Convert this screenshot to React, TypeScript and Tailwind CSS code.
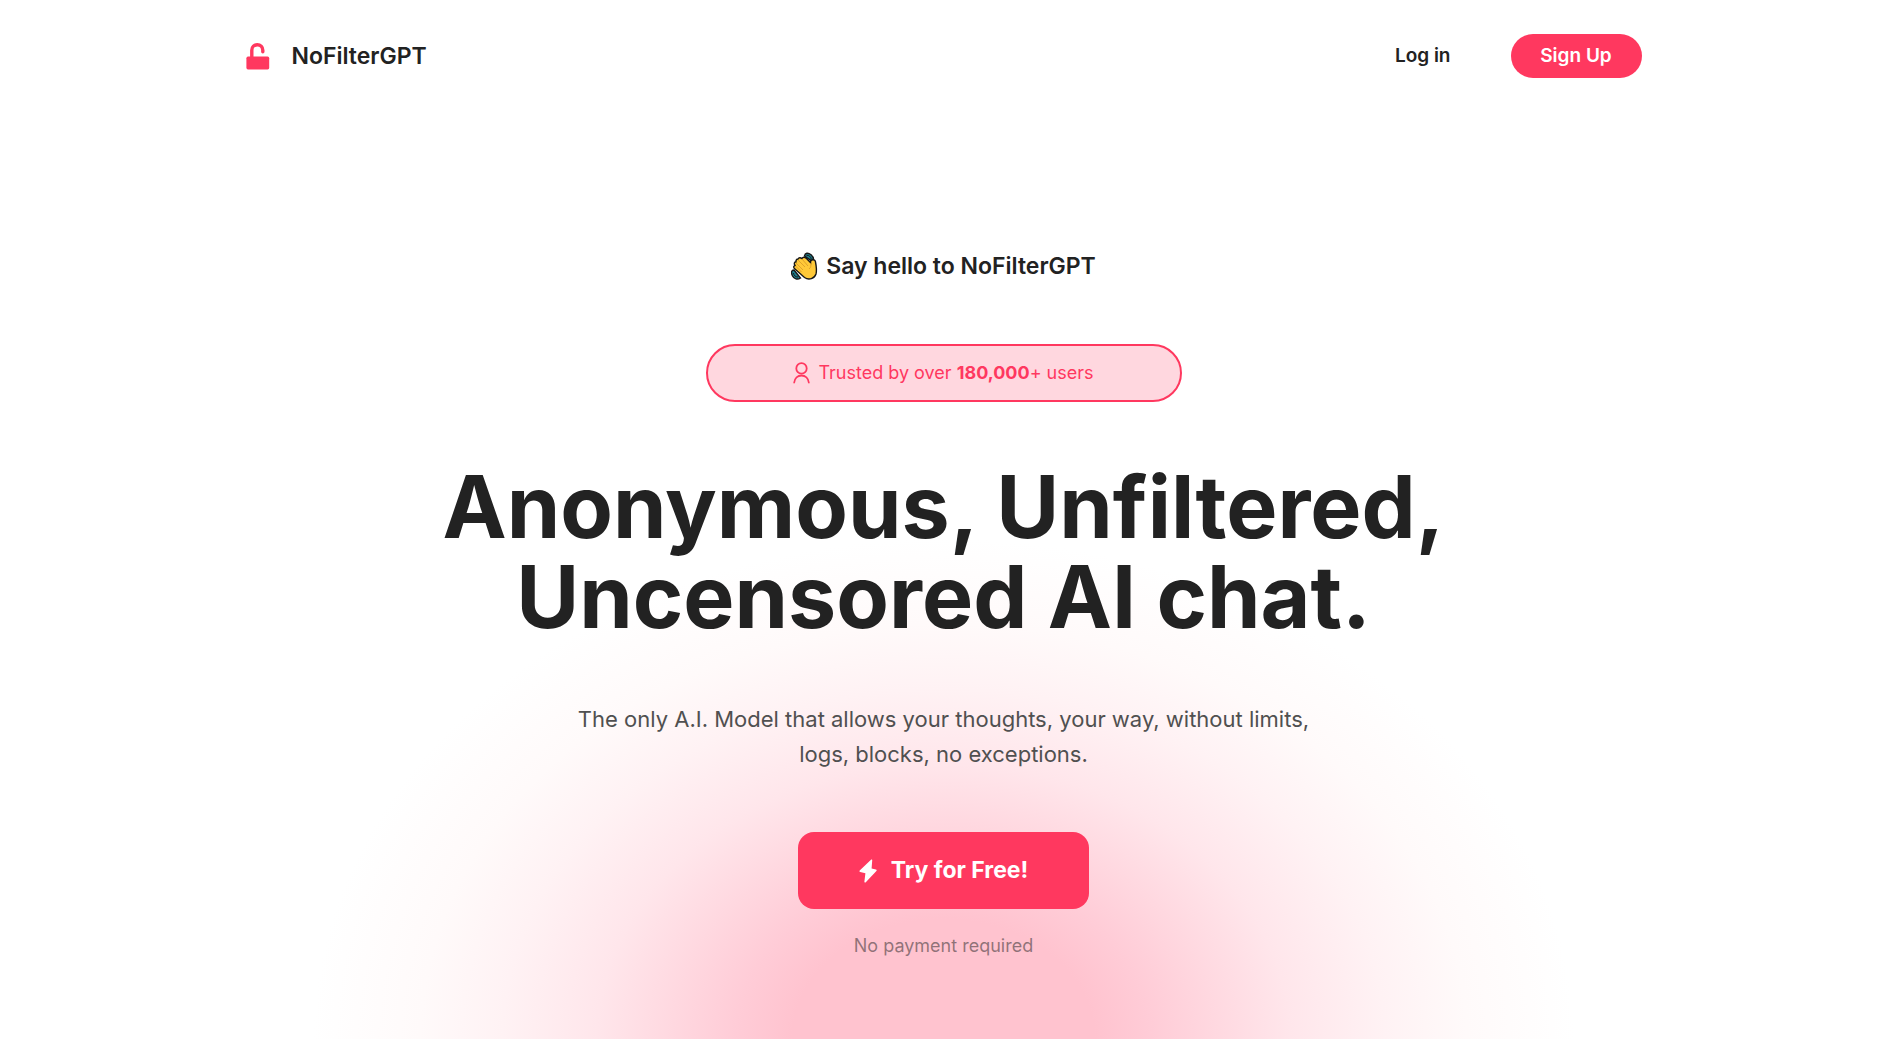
function UnlockIcon() {
  return (
    <svg viewBox="0 0 24 27" className="h-[27px] w-6 text-[#ff385f]" fill="currentColor" aria-hidden="true">
      <rect x="0.4" y="13.6" width="22.8" height="12.8" rx="1.6" />
      <path d="M5.8 14.5V7.2a5.500 5.500 0 0 1 11 0v1.600" fill="none" stroke="currentColor" strokeWidth="3.4" strokeLinecap="round" />
    </svg>
  );
}

function WaveIcon() {
  return (
    <svg viewBox="0 0 27 29" className="h-[29px] w-[27px]" aria-hidden="true">
      <path
        d="M13.5 4C14 .8 17 .3 20 2.8c2.500 2 3 4.400 2 7zM3 18c-3 0-3 3-1.500 6C3 27 6.500 28 9.500 26z"
        fill="#1b7f90"
        stroke="#161616"
        strokeWidth="1.4"
      />
      <path d="M15.5 3.300c2.500-.3 4.500 1.600 4.800 4M2.500 21c.3 2.500 2 4 4.500 4" fill="none" stroke="#161616" strokeWidth="1" />
      <path
        d="M7 7c1-2 3-1 4-.5 1-2 3-1.500 4.500 0l4 4c-.3-3 4.500-4 5-.5.8 4 1.500 8 .5 12-1.500 4.500-7 6.500-11.500 3.500L4 17c-2-1.500-1.500-3 0-3.700-1.500-1.800-.5-3.300 1-3.500-.2-1.300.5-2.800 2-2.800z"
        fill="#ffc938"
        stroke="#161616"
        strokeWidth="1.4"
      />
      <path
        d="m7 8 7 7M5 11l7 7M4.500 14l6 6M11 7l6 7M20 11c-.5 3 .5 4-2 6"
        fill="none"
        stroke="#e0a22a"
        strokeWidth="1"
      />
    </svg>
  );
}

function UserIcon() {
  return (
    <svg
      viewBox="0 0 17 22"
      className="h-[22px] w-[17px]"
      fill="none"
      stroke="currentColor"
      strokeWidth="1.8"
      strokeLinecap="round"
      aria-hidden="true"
    >
      <circle cx="8.5" cy="6.4" r="5.2" />
      <path d="M1.200 20.500c.5-4.300 3.500-7 7.300-7s6.800 2.700 7.300 7" />
    </svg>
  );
}

function BoltIcon() {
  return (
    <svg viewBox="0 0 18 24" className="h-6 w-[18px]" fill="currentColor" aria-hidden="true">
      <path d="M12 .7c.6-.6 1.400-.2 1.200.7l-.6 8.100 4.300 1c.8.2 1 .9.5 1.500L6.800 23.200c-.6.700-1.600.3-1.400-.7l1-8.200-5.200-1.400c-.8-.2-1-.9-.5-1.500z" />
    </svg>
  );
}

function Header() {
  return (
    <header className="mx-auto flex w-full max-w-[1396px] items-center justify-between pt-[34px]">
      <a href="#" className="flex items-center gap-[22px] text-[23px] leading-8 font-semibold">
        <UnlockIcon />
        NoFilterGPT
      </a>
      <nav className="flex items-center gap-[60px] text-[19px] leading-6 font-semibold">
        <a href="#login">Log in</a>
        <button type="button" className="h-11 w-[131px] rounded-full bg-[#ff385f] text-white">
          Sign Up
        </button>
      </nav>
    </header>
  );
}

function Hero() {
  return (
    <main className="flex flex-col items-center pt-[172px] text-center">
      <div className="flex items-center gap-2 text-[23px] leading-8 font-semibold">
        <WaveIcon />
        <p>Say hello to NoFilterGPT</p>
      </div>

      <div className="mt-[62px] flex h-[58px] w-full max-w-[476px] items-center justify-center gap-2 rounded-full border-2 border-[#ff385f] bg-[#ffd7df] text-lg text-[#ff385f]">
        <UserIcon />
        <p>
          Trusted by over <strong className="font-bold">180,000</strong>+ users
        </p>
      </div>

      <h1 className="mt-[60px] text-[86px] leading-[90px] font-bold">
        Anonymous, Unfiltered,
        <br />
        Uncensored AI chat.
      </h1>

      <p className="mt-[60px] text-[22px] leading-[35px] text-[#505050]">
        The only A.I. Model that allows your thoughts, your way, without limits,
        <br />
        logs, blocks, no exceptions.
      </p>

      <button
        type="button"
        className="mt-[60px] flex h-[77px] w-[291px] items-center justify-center gap-[14px] rounded-2xl bg-[#ff385f] text-[23px] font-bold text-white"
      >
        <BoltIcon />
        Try for Free!
      </button>
      <p className="mt-[23px] text-lg text-[#222]/50">No payment required</p>
    </main>
  );
}

export default function App() {
  return (
    <div className="min-h-screen bg-white bg-[radial-gradient(630px_500px_at_calc(50%+5px)_100%,#ffc3cf_0%,#ffc3cf_24%,#ffccd7_33%,#ffd8e0_43%,#ffe6eb_55%,#fff2f4_70%,#fffafa_83%,#ffffff_100%)] pl-2.5 font-['Inter',sans-serif] text-[#222]">
      <Header />
      <Hero />
    </div>
  );
}
